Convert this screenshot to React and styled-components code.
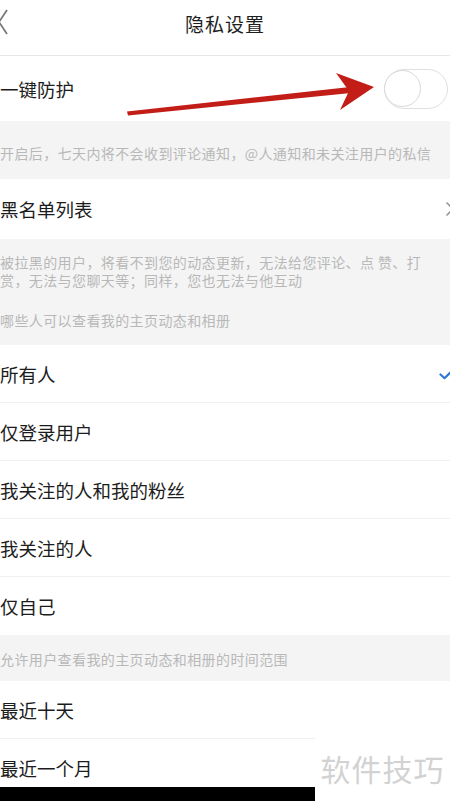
import React from 'react';
import styled, { createGlobalStyle } from 'styled-components';

const GlobalStyle = createGlobalStyle`
  html, body {
    margin: 0;
    padding: 0;
    background: #ffffff;
  }
  body {
    font-family: "Noto Sans CJK SC", "Noto Sans", sans-serif;
    -webkit-font-smoothing: antialiased;
  }
`;

const Page = styled.div`
  position: relative;
  width: 450px;
  height: 801px;
  overflow: hidden;
  background: #f4f4f4;
`;

const Header = styled.header`
  height: 56px;
  box-sizing: border-box;
  padding-bottom: 8px;
  display: flex;
  align-items: center;
  justify-content: center;
  position: relative;
  background: #fff;
  border-bottom: 1px solid #e6e6e6;
`;

const BackIcon = styled.svg`
  position: absolute;
  left: -2px;
  top: 8px;
`;

const Title = styled.h1`
  margin: 0;
  font-size: 19px;
  font-weight: 400;
  color: #1e1e1e;
  letter-spacing: 1px;
`;

const Row = styled.div`
  height: ${({ $h }) => $h || 58}px;
  box-sizing: border-box;
  display: flex;
  align-items: center;
  justify-content: space-between;
  background: #fff;
  border-bottom: ${({ $line }) => ($line ? '1px solid #f0f0f0' : 'none')};
`;

const Label = styled.span`
  font-size: 18.5px;
  color: #1c1c1c;
  line-height: 24px;
`;

const Note = styled.div`
  padding: ${({ $pad }) => $pad};
  font-size: 14px;
  line-height: ${({ $lh }) => $lh || 17}px;
  color: #b8b8b8;
  white-space: nowrap;
  letter-spacing: 0.4px;
`;

const Toggle = styled.div`
  width: 64px;
  height: 40px;
  box-sizing: border-box;
  border-radius: 20px;
  border: 1.5px solid #e0e0e0;
  background: #fff;
  margin-right: 2px;
  display: flex;
  align-items: center;
`;

const Knob = styled.div`
  width: 37px;
  height: 37px;
  box-sizing: border-box;
  border-radius: 50%;
  border: 1.5px solid #d8d8d8;
  background: #fff;
  margin-left: -1.5px;
`;

const Trailing = styled.svg`
  margin-right: ${({ $mr }) => $mr}px;
  flex-shrink: 0;
`;

const Overlay = styled.svg`
  position: absolute;
  left: 0;
  top: 0;
  pointer-events: none;
`;

const Watermark = styled.div`
  position: absolute;
  left: 315px;
  top: 738px;
  width: 135px;
  height: 63px;
  background: #fff;
  display: flex;
  align-items: center;
  justify-content: center;
  padding-bottom: 3px;
  box-sizing: border-box;
  font-size: 30px;
  color: #d2d2d2;
  letter-spacing: 1px;
`;

const BlackBar = styled.div`
  position: absolute;
  left: 0;
  top: 787px;
  width: 315px;
  height: 14px;
  background: #000;
`;

const audience = ['所有人', '仅登录用户', '我关注的人和我的粉丝', '我关注的人', '仅自己'];

const Check = () => (
  <Trailing width="16" height="12" viewBox="0 0 16 12" $mr={-5}>
    <path d="M1.5 6.5 L5.5 10.2 L14.5 1.5" fill="none" stroke="#2f78d6" strokeWidth="2.2" strokeLinecap="round" strokeLinejoin="round" />
  </Trailing>
);

const App = () => (
  <Page>
    <GlobalStyle />
    <Header>
      <BackIcon width="12" height="28" viewBox="0 0 12 28">
        <path d="M9 2 L1 14 L9 26" fill="none" stroke="#777" strokeWidth="1.8" />
      </BackIcon>
      <Title>隐私设置</Title>
    </Header>

    <Row $h={65}>
      <Label>一键防护</Label>
      <Toggle>
        <Knob />
      </Toggle>
    </Row>
    <Note $pad="24px 0 17px">开启后，七天内将不会收到评论通知，@人通知和未关注用户的私信</Note>

    <Row $h={60}>
      <Label>黑名单列表</Label>
      <Trailing width="10" height="16" viewBox="0 0 10 16" $mr={-5}>
        <path d="M1.5 1.5 L8 8 L1.5 14.5" fill="none" stroke="#9a9a9a" strokeWidth="1.6" />
      </Trailing>
    </Row>
    <Note $pad="14px 0 0" $lh={18}>
      被拉黑的用户，将看不到您的动态更新，无法给您评论、点 赞、打
      <br />
      赏，无法与您聊天等；同样，您也无法与他互动
    </Note>
    <Note $pad="23px 0 16px">哪些人可以查看我的主页动态和相册</Note>

    {audience.map((item, i) => (
      <Row key={item} $line={i < audience.length - 1}>
        <Label>{item}</Label>
        {i === 0 && <Check />}
      </Row>
    ))}

    <Note $pad="16px 0 13px">允许用户查看我的主页动态和相册的时间范围</Note>
    <Row $line>
      <Label>最近十天</Label>
    </Row>
    <Row>
      <Label>最近一个月</Label>
    </Row>

    <Overlay width="450" height="140" viewBox="0 0 450 140">
      <polygon points="127,111.5 350,87 351,93 128,115.5" fill="#c21d17" />
      <polygon points="336,73 374,87 340,110 349,91" fill="#c21d17" />
    </Overlay>

    <Watermark>软件技巧</Watermark>
    <BlackBar />
  </Page>
);

export default App;
